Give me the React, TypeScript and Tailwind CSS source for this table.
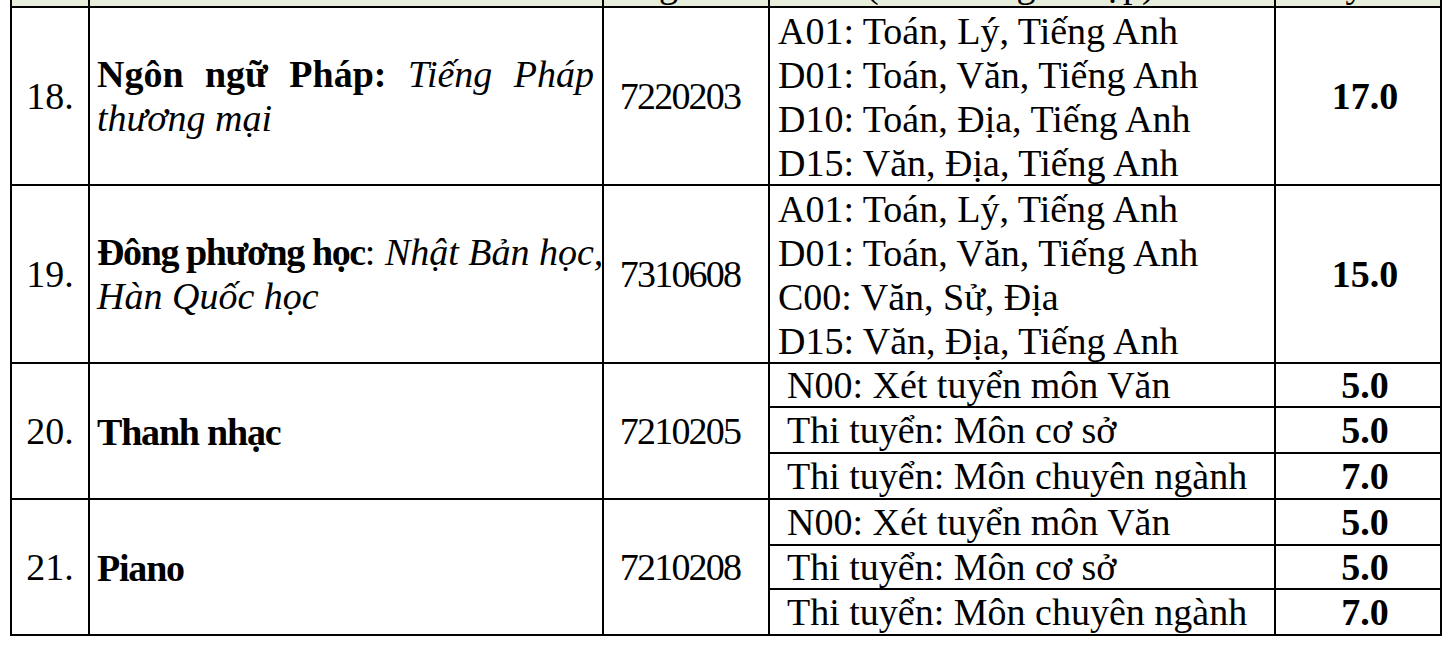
const serif = "font-['Liberation_Serif','Times_New_Roman',serif]";

type Sub = { text: string; score: string };

const rowsA = [
  {
    no: "18.",
    code: "7220203",
    score: "17.0",
    combos: [
      "A01: Toán, Lý, Tiếng Anh",
      "D01: Toán, Văn, Tiếng Anh",
      "D10: Toán, Địa, Tiếng Anh",
      "D15: Văn, Địa, Tiếng Anh",
    ],
  },
  {
    no: "19.",
    code: "7310608",
    score: "15.0",
    combos: [
      "A01: Toán, Lý, Tiếng Anh",
      "D01: Toán, Văn, Tiếng Anh",
      "C00: Văn, Sử, Địa",
      "D15: Văn, Địa, Tiếng Anh",
    ],
  },
];

const music: Sub[] = [
  { text: "N00: Xét tuyển môn Văn", score: "5.0" },
  { text: "Thi tuyển: Môn cơ sở", score: "5.0" },
  { text: "Thi tuyển: Môn chuyên ngành", score: "7.0" },
];

const rowsB = [
  { no: "20.", name: "Thanh nhạc", code: "7210205" },
  { no: "21.", name: "Piano", code: "7210208" },
];

function HeadCell({ text, className = "" }: { text?: string; className?: string }) {
  return (
    <div className={`bg-[#e6edda] overflow-hidden flex items-end ${className}`}>
      <div className="h-[44px] leading-[44px] w-full whitespace-nowrap">{text}</div>
    </div>
  );
}

function NameCell({ children }: { children: React.ReactNode }) {
  return (
    <div className="bg-white flex flex-col justify-center pl-[7px] pr-[8px]">{children}</div>
  );
}

export default function App() {
  return (
    <div className={`w-[1448px] h-[646px] bg-white text-black text-[38px] leading-[44px] overflow-hidden ${serif}`}>
      <div className="ml-[10px] w-[1432px] grid grid-cols-[76px_512px_164px_504px_164px] grid-rows-[6px_176px_176px_42px_44px_44px_44px_42px_44px] gap-[2px] bg-black px-[2px] pb-[2px]">
        {/* header strip, only the bottom of the previous header row shows */}
        <HeadCell />
        <HeadCell />
        <HeadCell text="ngành" className="pl-[36px] text-left" />
        <HeadCell text="(Theo từng tổ hợp)" className="pl-[96px]" />
        <HeadCell text="tuyển" className="pl-[40px]" />

        {rowsA.map((r, i) => (
          <div key={r.no} className="contents">
            <div className="bg-white flex items-center justify-center">{r.no}</div>
            {i === 0 ? (
              <NameCell>
                <div className="text-justify [text-align-last:justify]">
                  <b>Ngôn ngữ Pháp:</b> <i>Tiếng Pháp</i>
                </div>
                <div>
                  <i>thương mại</i>
                </div>
              </NameCell>
            ) : (
              <NameCell>
                <div className="whitespace-nowrap">
                  <b className="tracking-[-1.4px]">Đông phương học</b>: <i>Nhật Bản học,</i>
                </div>
                <div>
                  <i>Hàn Quốc học</i>
                </div>
              </NameCell>
            )}
            <div className="bg-white flex items-center justify-center pr-[12px] tracking-[-1.8px]">
              {r.code}
            </div>
            <div className="bg-white pl-[8px] pt-[1px] whitespace-nowrap">
              {r.combos.map((c) => (
                <div key={c}>{c}</div>
              ))}
            </div>
            <div className="bg-white flex items-center justify-center pl-[14px] font-bold">
              {r.score}
            </div>
          </div>
        ))}

        {rowsB.map((r) => (
          <div key={r.no} className="contents">
            <div className="bg-white row-span-3 flex items-center justify-center">{r.no}</div>
            <div className="bg-white row-span-3 flex items-center pl-[7px] pt-[2px] font-bold tracking-[-1.2px]">
              {r.name}
            </div>
            <div className="bg-white row-span-3 flex items-center justify-center pr-[12px] tracking-[-1.8px]">
              {r.code}
            </div>
            {music.map((m) => (
              <div key={m.text} className="contents">
                <div className="bg-white flex items-center pl-[17px] whitespace-nowrap">{m.text}</div>
                <div className="bg-white flex items-center justify-center pl-[14px] font-bold">
                  {m.score}
                </div>
              </div>
            ))}
          </div>
        ))}
      </div>
    </div>
  );
}
